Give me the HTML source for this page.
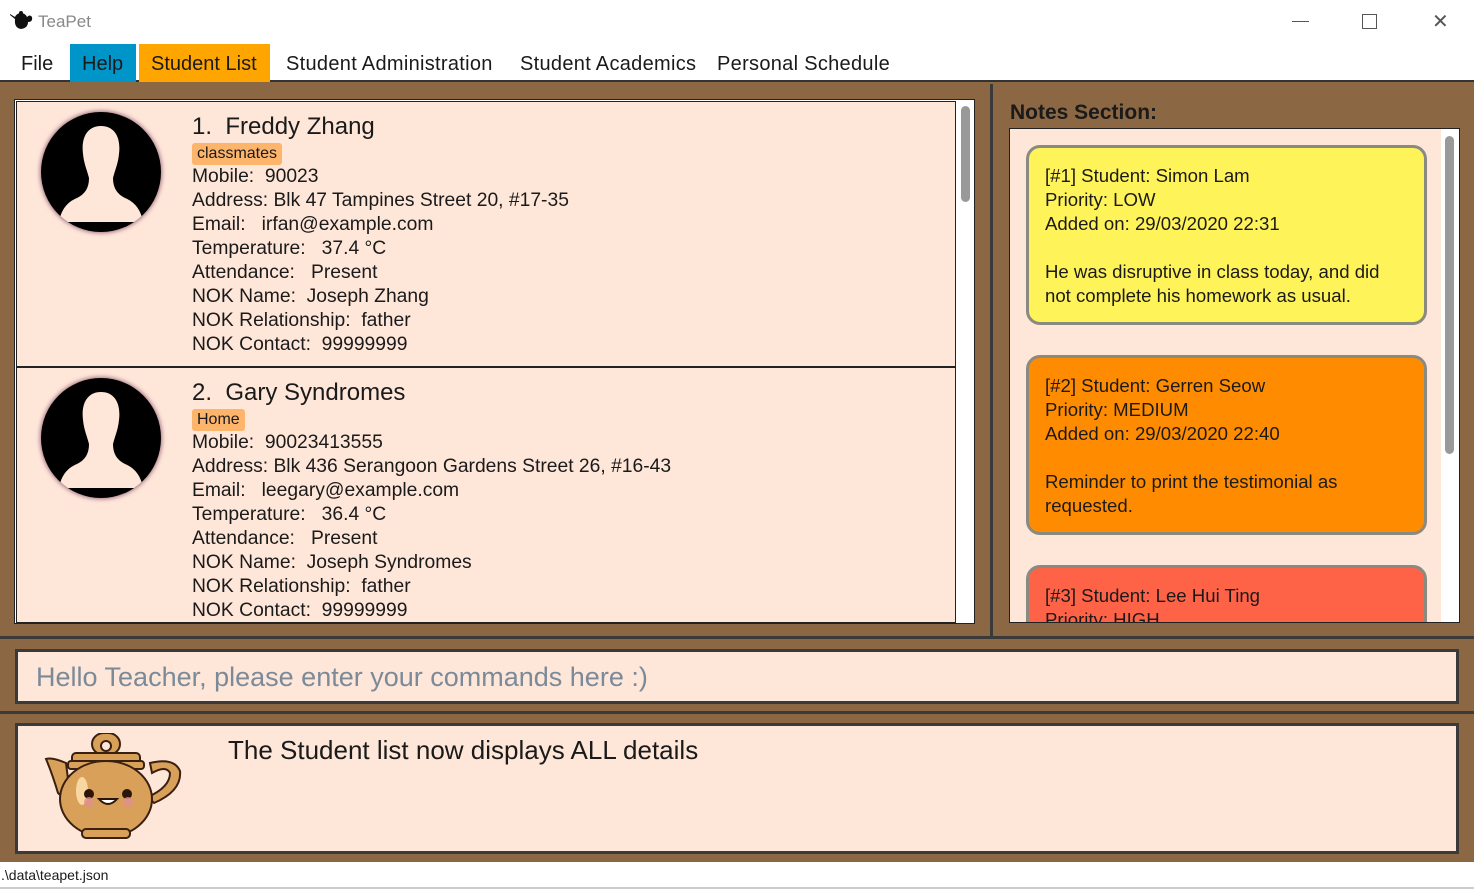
<!DOCTYPE html>
<html><head><meta charset="utf-8"><style>
*{margin:0;padding:0;box-sizing:border-box}
body{width:1474px;height:889px;position:relative;overflow:hidden;background:#8b6743;font-family:"Liberation Sans","DejaVu Sans",sans-serif;color:#1a1a1a}
.a{position:absolute}
.menu span{position:absolute;top:44px;height:38px;line-height:40px;font-size:20px;padding:0 12px}
.card{position:absolute;left:16px;width:940px;background:#fee6d9;border:1px solid #222}
.av{position:absolute;left:24px;top:10px;width:120px;height:120px;border-radius:50%;background:#000;box-shadow:0 0 4px 1px #a07080;overflow:hidden}
.info{position:absolute;left:175px;font-size:19.3px;line-height:24px;white-space:pre}
.tag{display:inline-block;background:#fdb46b;border-radius:3px;font-size:16px;line-height:22px;padding:0 5px;margin:2px 0 0}
.note{position:absolute;left:1026px;width:401px;border:3px solid #8a8a80;border-radius:14px;padding:16px 24px 16px 16px;font-size:18.6px;line-height:24px}
</style></head><body>
<div class="a" style="left:0;top:0;width:1474px;height:82px;background:#fff;border-bottom:2px solid #333"></div>
<svg class="a" style="left:8px;top:10px" width="26" height="22" viewBox="0 0 26 22"><path d="M2 5 L7 9 Q6 18 13 19 Q20 18 20 12 Q25 12 24 7 Q22 4 19 7 Q17 3 13 3 Q9 3 7 7 L2 4Z" fill="#111"/><circle cx="13" cy="3" r="2" fill="#111"/></svg>
<div class="a" style="left:38px;top:12px;font-size:17px;color:#888">TeaPet</div>
<div class="a" style="left:1292px;top:21px;width:17px;height:1px;background:#555"></div>
<div class="a" style="left:1362px;top:14px;width:15px;height:15px;border:1px solid #555"></div>
<div class="a" style="left:1432px;top:12px;font-size:20px;color:#555;line-height:20px">✕</div>
<div class="menu">
<span style="left:9px">File</span>
<span style="left:70px;background:#0095c8;width:66px">Help</span>
<span style="left:139px;background:#ffa500;width:131px">Student List</span>
<span style="left:274px;letter-spacing:0.3px">Student Administration</span>
<span style="left:508px;letter-spacing:0.3px">Student Academics</span>
<span style="left:705px;letter-spacing:0.3px">Personal Schedule</span>
</div>
<div class="a" style="left:14px;top:99px;width:961px;height:525px;background:#fff;border:1px solid #222"></div>
<div class="a" style="left:961px;top:106px;width:9px;height:96px;background:#999;border-radius:5px"></div>
<div class="card" style="top:101px;height:266px">
<div class="av"><svg width="120" height="120" viewBox="0 0 120 120"><path d="M60 14 C46 14 40 26 42 42 C43 52 46 58 48 66 C48 76 44 82 36 86 C26 90 20 98 18 110 L102 110 C100 98 94 90 84 86 C76 82 72 76 72 66 C74 58 77 52 78 42 C80 26 74 14 60 14Z" fill="#fee6d9"/></svg></div>
<div class="info" style="top:12px"><span style="font-size:24px;line-height:26px">1.  Freddy Zhang</span>
<span class="tag">classmates</span>
Mobile:  90023
Address: Blk 47 Tampines Street 20, #17-35
Email:   irfan@example.com
Temperature:   37.4 °C
Attendance:   Present
NOK Name:  Joseph Zhang
NOK Relationship:  father
NOK Contact:  99999999</div>
</div>
<div class="card" style="top:367px;height:256px">
<div class="av"><svg width="120" height="120" viewBox="0 0 120 120"><path d="M60 14 C46 14 40 26 42 42 C43 52 46 58 48 66 C48 76 44 82 36 86 C26 90 20 98 18 110 L102 110 C100 98 94 90 84 86 C76 82 72 76 72 66 C74 58 77 52 78 42 C80 26 74 14 60 14Z" fill="#fee6d9"/></svg></div>
<div class="info" style="top:12px"><span style="font-size:24px;line-height:26px">2.  Gary Syndromes</span>
<span class="tag">Home</span>
Mobile:  90023413555
Address: Blk 436 Serangoon Gardens Street 26, #16-43
Email:   leegary@example.com
Temperature:   36.4 °C
Attendance:   Present
NOK Name:  Joseph Syndromes
NOK Relationship:  father
NOK Contact:  99999999</div>
</div>
<div class="a" style="left:990px;top:84px;width:3px;height:554px;background:#3a3a3a"></div>
<div class="a" style="left:1010px;top:101px;font-size:21px;font-weight:bold">Notes Section:</div>
<div class="a" style="left:1009px;top:128px;width:451px;height:495px;background:#fee6d9;border:1px solid #222;overflow:hidden">
<div class="a" style="right:0;top:0;width:18px;height:495px;background:#fff"></div>
<div class="a" style="right:5px;top:7px;width:9px;height:318px;background:#999;border-radius:5px"></div>
</div>
<div style="position:absolute;left:1009px;top:128px;width:451px;height:494px;overflow:hidden">
<div class="note" style="left:17px;top:17px;height:180px;background:#fff35a">[#1] Student: Simon Lam<br>Priority: LOW<br>Added on: 29/03/2020 22:31<br><br>He was disruptive in class today, and did not complete his homework as usual.</div>
<div class="note" style="left:17px;top:227px;height:180px;background:#ff8c00">[#2] Student: Gerren Seow<br>Priority: MEDIUM<br>Added on: 29/03/2020 22:40<br><br>Reminder to print the testimonial as requested.</div>
<div class="note" style="left:17px;top:437px;height:180px;background:#ff6347">[#3] Student: Lee Hui Ting<br>Priority: HIGH</div>
</div>
<div class="a" style="left:0;top:636px;width:1474px;height:3px;background:#3a3a3a"></div>
<div class="a" style="left:15px;top:649px;width:1444px;height:55px;background:#fee6d9;border:3px solid #3a3a3a;font-size:27px;color:#7b8a99;padding:9px 18px;line-height:32px">Hello Teacher, please enter your commands here :)</div>
<div class="a" style="left:0;top:711px;width:1474px;height:3px;background:#3a3a3a"></div>
<div class="a" style="left:15px;top:723px;width:1444px;height:131px;background:#fee6d9;border:3px solid #3a3a3a"></div>
<div class="a" style="left:228px;top:735px;font-size:26px">The Student list now displays ALL details</div>
<svg class="a" style="left:44px;top:733px" width="140" height="108" viewBox="0 0 140 108">
<g stroke="#3a2010" stroke-width="2" fill="#d9a05a">
<path d="M22 30 Q8 24 2 26 Q8 40 14 60 Q20 66 26 62Z"/>
<path d="M106 30 Q130 24 136 38 Q138 58 110 70 L104 64 Q126 54 126 40 Q122 32 108 40Z"/>
<rect x="48" y="0" width="28" height="22" rx="12"/>
<rect x="28" y="20" width="68" height="12" rx="4"/>
<rect x="24" y="28" width="76" height="8" rx="3"/>
<ellipse cx="62" cy="66" rx="46" ry="38"/>
<rect x="38" y="96" width="48" height="9" rx="4"/>
</g>
<circle cx="62" cy="13" r="5" fill="#fee6d9" stroke="#3a2010" stroke-width="2"/>
<ellipse cx="38" cy="58" rx="6" ry="14" fill="#f8d8a0"/>
<circle cx="45" cy="61" r="5" fill="#2a1508"/><circle cx="83" cy="61" r="5" fill="#2a1508"/>
<circle cx="45" cy="69" r="5" fill="#e09090" opacity=".8"/><circle cx="84" cy="69" r="5" fill="#e09090" opacity=".8"/>
<path d="M55 66 Q64 76 73 66Z" fill="#fff" stroke="#2a1508" stroke-width="2"/>
</svg>
<div class="a" style="left:0;top:862px;width:1474px;height:27px;background:#fff;border-bottom:2px solid #ccc;font-size:14px;padding:5px 0 0 1px">.\data\teapet.json</div>
</body></html>
